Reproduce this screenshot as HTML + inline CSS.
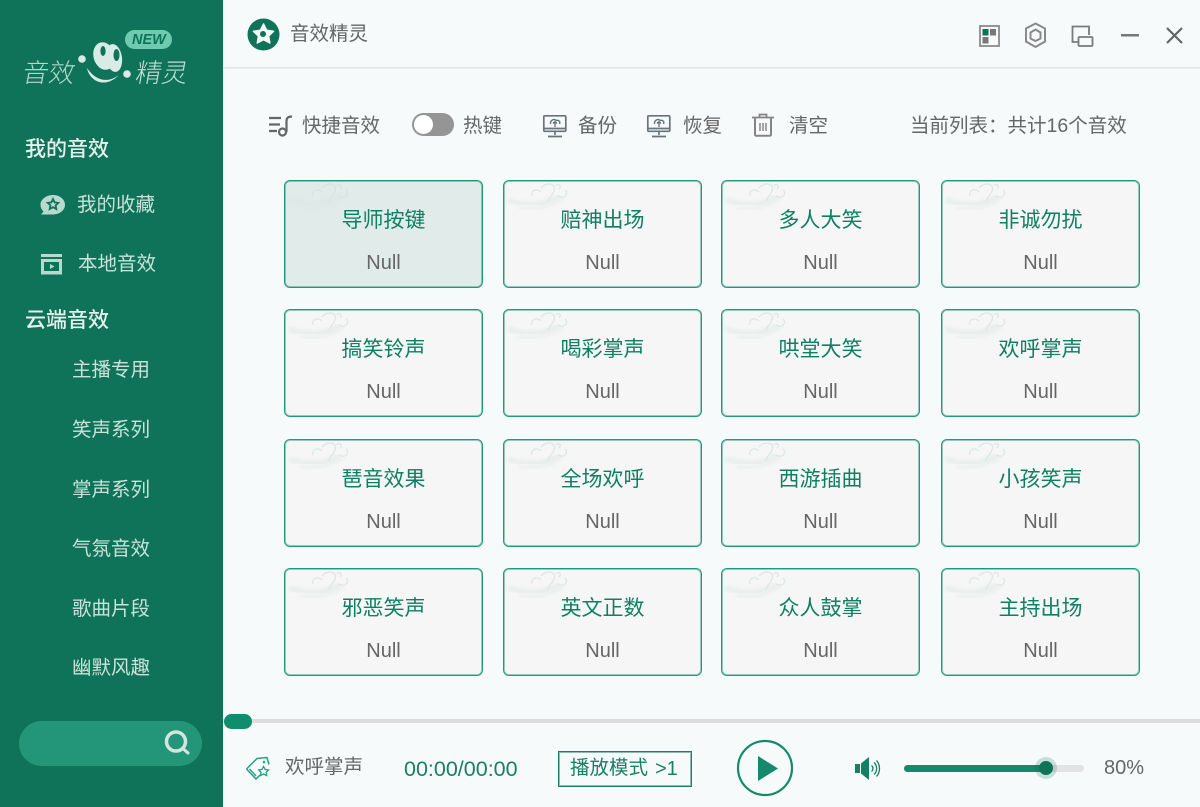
<!DOCTYPE html>
<html lang="zh"><head><meta charset="utf-8"><title>音效精灵</title>
<style>
*{box-sizing:border-box;margin:0;padding:0}
html,body{width:1200px;height:807px;overflow:hidden;background:#f6fafa}
body{position:relative;font-family:"Liberation Sans","Noto Sans CJK SC",sans-serif;color:#666}
.a{position:absolute;white-space:nowrap;line-height:1}
#side{position:absolute;left:0;top:0;width:223px;height:807px;background:#0e7358}
.s{color:#c9e2da;font-size:19.5px}
.h{color:#e4f1ed;font-size:21px;font-weight:500}
.t{color:#666;font-size:19.5px}
.card{position:absolute;width:199px;height:108px;border:1px solid #1f9a7b;box-shadow:inset 0 0 0 1px rgba(47,160,133,.5);border-radius:6px;background:#f6f6f6;overflow:hidden}
.card.on{background:#e0ebea}
.card svg{position:absolute;left:1px;top:1px;opacity:.75}
.card b{position:absolute;left:-1px;right:-1px;top:28px;text-align:center;font-weight:400;font-size:21px;line-height:24px;color:#0e7f62}
.card i{position:absolute;left:-1px;right:-1px;top:71px;text-align:center;font-style:normal;font-size:20px;line-height:22px;color:#666}
svg{position:absolute;overflow:visible}
</style></head><body>
<svg style="left:0;top:0" width="1200" height="807" viewBox="0 0 1200 807">
<rect x="223" y="67" width="977" height="1.5" fill="#e3e6e6"/>
<rect x="223" y="719" width="977" height="4" fill="#dcdcdc"/>
</svg>
<div id="side"></div>
<svg style="left:0;top:0" width="223" height="110" viewBox="0 0 223 110">
<rect x="125" y="30" width="47" height="19" rx="9.5" fill="#6fcbaf"/>
<ellipse cx="104" cy="56" rx="10.500" ry="14" transform="rotate(-15 104 56)" fill="#d8ebe6"/>
<ellipse cx="114" cy="58" rx="8" ry="14" transform="rotate(-8 114 58)" fill="#d8ebe6"/>
<ellipse cx="103" cy="51" rx="2.600" ry="5" fill="#0e7358"/><ellipse cx="116.500" cy="55" rx="3" ry="6" fill="#0e7358"/>
<circle cx="82" cy="59" r="3.800" fill="#d8ebe6"/><circle cx="127" cy="74" r="3.800" fill="#d8ebe6"/>
<path d="M87 68C89 80 104 90 119 75C107 84 95 80 87 68Z" fill="#d8ebe6"/>
</svg>
<div class="a" style="left:132px;top:33px;font-size:14.500px;font-weight:700;font-style:italic;color:#0e7358">NEW</div>
<div class="a" style="left:23px;top:60px;font-size:26px;color:#b5d6cc;transform:skewX(-10deg);font-weight:300">音效</div>
<div class="a" style="left:136px;top:60px;font-size:26px;color:#c4ded6;transform:skewX(-10deg);font-weight:300">精灵</div>
<div class="a h" style="left:25px;top:139px">我的音效</div>
<div class="a s" style="left:77px;top:196px">我的收藏</div>
<div class="a s" style="left:78px;top:255px">本地音效</div>
<div class="a h" style="left:25px;top:310px">云端音效</div>
<div class="a s" style="left:72px;top:361px">主播专用</div>
<div class="a s" style="left:72px;top:421px">笑声系列</div>
<div class="a s" style="left:72px;top:481px">掌声系列</div>
<div class="a s" style="left:72px;top:540px">气氛音效</div>
<div class="a s" style="left:72px;top:600px">歌曲片段</div>
<div class="a s" style="left:72px;top:659px">幽默风趣</div>
<svg style="left:40px;top:195px" width="26" height="22" viewBox="0 0 26 22"><path d="M13 0C19.600 0 25 4.300 25 9.800S19.600 19.500 13 19.500H1L3.500 16.500C1.500 14.800 .5 12.300 .5 9.800 .5 4.300 6.400 0 13 0Z" fill="#b9d9cf"/><path d="M13 4l1.600 3.400 3.700.5-2.700 2.500.7 3.600-3.300-1.800-3.300 1.800.7-3.600-2.700-2.500 3.700-.5Z" fill="none" stroke="#0e7358" stroke-width="1.800"/></svg>
<svg style="left:41px;top:254px" width="22" height="21" viewBox="0 0 22 21"><rect x="0" y="0" width="21" height="3" fill="#b9d9cf"/><rect x="0" y="5" width="21" height="15.500" fill="#b9d9cf"/><rect x="3" y="8" width="15" height="9" fill="#0e7358"/><path d="M9 10l4.500 2.500-4.500 2.500Z" fill="#b9d9cf"/></svg>
<svg style="left:19px;top:721px" width="183" height="45" viewBox="0 0 183 45"><rect width="183" height="45" rx="22.500" fill="#23967a"/><circle cx="157" cy="20.500" r="9.500" fill="none" stroke="#d4e6e0" stroke-width="3.500"/><path d="M165 28.500l4 3.500" stroke="#d4e6e0" stroke-width="3" stroke-linecap="round"/></svg>

<svg style="left:247px;top:18px" width="33" height="33" viewBox="0 0 33 33"><circle cx="16.500" cy="16.500" r="16" fill="#0e7358"/><path d="M16.500 6l3.200 6.300 6.800 1-4.900 4.800 1.300 6.900-6.400-3.300-6.200 3.300 1.100-6.900-4.900-4.800 6.900-1Z" fill="#f2f7f6" stroke="#f2f7f6" stroke-width="1.500" stroke-linejoin="round"/><circle cx="16" cy="16" r="3" fill="#0e7358"/></svg>
<div class="a t" style="left:290px;top:25px;font-size:19.5px">音效精灵</div>
<svg style="left:979px;top:25px" width="21" height="22" viewBox="0 0 21 22"><rect x="1" y="1" width="19" height="20" fill="#f8fafa" stroke="#8b8b8b" stroke-width="1.800"/><rect x="3.500" y="4" width="6" height="6.500" fill="#0e7358"/><rect x="11" y="4" width="6" height="6.500" fill="#777"/><rect x="3.500" y="12" width="6" height="6.500" fill="#777"/></svg>
<svg style="left:1025px;top:22px" width="21" height="27" viewBox="0 0 21 27"><path d="M10.500 1.500L20 6.500v13L10.500 25 1 19.500v-13Z" fill="none" stroke="#8a8a8a" stroke-width="2"/><path d="M10.500 7.500L15.500 10.500v6L10.500 19 5.500 16.500V10.500Z" fill="none" stroke="#8a8a8a" stroke-width="2"/></svg>
<svg style="left:1071px;top:25px" width="23" height="23" viewBox="0 0 23 23"><path d="M7 17H1.500V1.500H18V10" fill="none" stroke="#7a7a7a" stroke-width="1.800"/><rect x="7.500" y="12" width="14" height="9" rx="1" fill="#f6fafa" stroke="#7a7a7a" stroke-width="1.800"/></svg>
<svg style="left:1121px;top:34px" width="18" height="3" viewBox="0 0 18 3"><rect width="18" height="2.500" fill="#777"/></svg>
<svg style="left:1166px;top:27px" width="17" height="17" viewBox="0 0 17 17"><path d="M1 1l15 15M16 1L1 16" stroke="#666" stroke-width="2.200" fill="none"/></svg>

<svg style="left:268px;top:115px" width="25" height="22" viewBox="0 0 25 22"><path d="M1 3h12M1 9.500h11M1 16h8" stroke="#666" stroke-width="2.200"/><path d="M18.500 17V6C18.500 3 20 1.500 24 1.500" fill="none" stroke="#666" stroke-width="2.200"/><circle cx="14.500" cy="17" r="3.500" fill="none" stroke="#666" stroke-width="2.200"/></svg>
<div class="a t" style="left:302px;top:117px">快捷音效</div>
<svg style="left:412px;top:113px" width="42" height="23" viewBox="0 0 42 23"><rect width="42" height="23" rx="11.500" fill="#959595"/><circle cx="11.500" cy="11.500" r="9.500" fill="#fff"/></svg>
<div class="a t" style="left:463px;top:117px">热键</div>
<svg style="left:543px;top:115px" width="24" height="23" viewBox="0 0 24 23"><rect x=".8" y=".8" width="22" height="15.500" rx="1" fill="none" stroke="#68747c" stroke-width="1.700"/><path d="M1 13.500h22M12 16v4M5 21.500h14" stroke="#68747c" stroke-width="1.700" fill="none"/><path d="M7.500 9C7 5.500 11 3 13.500 5.500 16 4.800 17.500 7 16.500 9M12 12V7M10 8.500l2-2 2 2" stroke="#68747c" stroke-width="1.400" fill="none"/></svg>
<div class="a t" style="left:578px;top:117px">备份</div>
<svg style="left:647px;top:115px" width="24" height="23" viewBox="0 0 24 23"><rect x=".8" y=".8" width="22" height="15.500" rx="1" fill="none" stroke="#68747c" stroke-width="1.700"/><path d="M1 13.500h22M12 16v4M5 21.500h14" stroke="#68747c" stroke-width="1.700" fill="none"/><path d="M7.500 9C7 5.500 11 3 13.500 5.500 16 4.800 17.500 7 16.500 9M12 12V7M10 8.500l2-2 2 2" stroke="#68747c" stroke-width="1.400" fill="none"/></svg>
<div class="a t" style="left:683px;top:117px">恢复</div>
<svg style="left:751px;top:113px" width="24" height="24" viewBox="0 0 24 24"><path d="M1 4.500h22M8.500 4V1.500h7V4" stroke="#858585" stroke-width="1.800" fill="none"/><path d="M4 5v16.500a1.300 1.300 0 0 0 1.300 1.300h13.400a1.300 1.300 0 0 0 1.300-1.300V5" stroke="#858585" stroke-width="2" fill="none"/><path d="M9 10v8M12 10v8M15 10v8" stroke="#858585" stroke-width="1.500"/></svg>
<div class="a t" style="left:789px;top:117px">清空</div>
<div class="a t" style="left:910px;top:117px;font-size:19.5px">当前列表：共计16个音效</div>

<svg width="0" height="0" style="left:0;top:0"><defs><filter id="bl"><feGaussianBlur stdDeviation="1.500"/></filter><g id="cloud"><path d="M3 18C20 24 38 24 54 14" fill="none" stroke="#dbe7e4" stroke-width="5" opacity=".7" filter="url(#bl)"/><path d="M14 26C30 28 46 24 58 16" fill="none" stroke="#dfe9e6" stroke-width="3" opacity=".7" filter="url(#bl)"/><path d="M27 14C25 8 33 6 36 10M36 6C42 -1 52 2 49 9 47 14 43 16 43 20M54 7C58 3 52 1 51 4M53 14C60 18 64 11 60 8" fill="none" stroke="#d3e3df" stroke-width="1.300"/></g></defs></svg>

<div class="card on" style="left:284px;top:180px"><svg width="90" height="50"><use href="#cloud"/></svg><b>导师按键</b><i>Null</i></div>
<div class="card" style="left:503px;top:180px"><svg width="90" height="50"><use href="#cloud"/></svg><b>赔神出场</b><i>Null</i></div>
<div class="card" style="left:721px;top:180px"><svg width="90" height="50"><use href="#cloud"/></svg><b>多人大笑</b><i>Null</i></div>
<div class="card" style="left:941px;top:180px"><svg width="90" height="50"><use href="#cloud"/></svg><b>非诚勿扰</b><i>Null</i></div>
<div class="card" style="left:284px;top:309px"><svg width="90" height="50"><use href="#cloud"/></svg><b>搞笑铃声</b><i>Null</i></div>
<div class="card" style="left:503px;top:309px"><svg width="90" height="50"><use href="#cloud"/></svg><b>喝彩掌声</b><i>Null</i></div>
<div class="card" style="left:721px;top:309px"><svg width="90" height="50"><use href="#cloud"/></svg><b>哄堂大笑</b><i>Null</i></div>
<div class="card" style="left:941px;top:309px"><svg width="90" height="50"><use href="#cloud"/></svg><b>欢呼掌声</b><i>Null</i></div>
<div class="card" style="left:284px;top:439px"><svg width="90" height="50"><use href="#cloud"/></svg><b>琶音效果</b><i>Null</i></div>
<div class="card" style="left:503px;top:439px"><svg width="90" height="50"><use href="#cloud"/></svg><b>全场欢呼</b><i>Null</i></div>
<div class="card" style="left:721px;top:439px"><svg width="90" height="50"><use href="#cloud"/></svg><b>西游插曲</b><i>Null</i></div>
<div class="card" style="left:941px;top:439px"><svg width="90" height="50"><use href="#cloud"/></svg><b>小孩笑声</b><i>Null</i></div>
<div class="card" style="left:284px;top:568px"><svg width="90" height="50"><use href="#cloud"/></svg><b>邪恶笑声</b><i>Null</i></div>
<div class="card" style="left:503px;top:568px"><svg width="90" height="50"><use href="#cloud"/></svg><b>英文正数</b><i>Null</i></div>
<div class="card" style="left:721px;top:568px"><svg width="90" height="50"><use href="#cloud"/></svg><b>众人鼓掌</b><i>Null</i></div>
<div class="card" style="left:941px;top:568px"><svg width="90" height="50"><use href="#cloud"/></svg><b>主持出场</b><i>Null</i></div>

<svg style="left:224px;top:714px" width="28" height="15" viewBox="0 0 28 15"><rect width="28" height="15" rx="7.500" fill="#0f8d6c"/></svg>
<svg style="left:245px;top:755px" width="26" height="26" viewBox="0 0 26 26"><path d="M1.500 14L12 3.500 22 2.500l2 7" fill="none" stroke="#24a083" stroke-width="1.500"/><path d="M1.500 14l9.500 10 4-4" fill="none" stroke="#24a083" stroke-width="1.500"/><path d="M4.500 14l6.500 7" stroke="#24a083" stroke-width="1.500"/><circle cx="19" cy="7" r="1.300" fill="#24a083"/><path d="M18.500 11.500l1.700 3 3.300.5-2.300 2.300.5 3.200-3.200-1.500-3 1.500.5-3.200-2.300-2.300 3.200-.5Z" fill="none" stroke="#24a083" stroke-width="1.300"/></svg>
<div class="a t" style="left:285px;top:758px">欢呼掌声</div>
<div class="a" style="left:404px;top:759px;color:#197f66;font-size:21.5px">00:00/00:00</div>
<div class="a" style="left:558px;top:751px;width:134px;height:36px;border:1px solid #1c8066;box-shadow:inset 0 0 0 1px rgba(28,128,102,.5)"></div>
<div class="a" style="left:570px;top:759px;font-size:19.5px;color:#197f66">播放模式</div>
<div class="a" style="left:655px;top:759px;font-size:20px;color:#197f66">&gt;1</div>
<svg style="left:737px;top:740px" width="56" height="56" viewBox="0 0 56 56"><circle cx="28" cy="28" r="27" fill="none" stroke="#15896c" stroke-width="2.200"/><path d="M21 16L41 28.500 21 41Z" fill="#14896b"/></svg>
<svg style="left:854px;top:756px" width="26" height="25" viewBox="0 0 26 25"><path d="M1 8h5v9H1Z" fill="#118065"/><path d="M7 7.500L15 1v23L7 17.500Z" fill="#118065"/><path d="M17.500 9.500C19.500 11 19.500 14 17.500 15.500M20 6.500C23.500 9.500 23.500 15.500 20 18.500M22.500 4.500C26.500 9 26.500 16 22.500 20.500" fill="none" stroke="#118065" stroke-width="1.300"/></svg>
<svg style="left:904px;top:755px" width="182" height="26" viewBox="0 0 182 26"><rect y="10" width="180" height="7" rx="3.500" fill="#e3e3e3"/><rect y="10" width="142" height="7" rx="3.500" fill="#128b6b"/><circle cx="142" cy="13" r="11" fill="#0e7358" opacity=".2"/><circle cx="142" cy="13" r="7" fill="#0e7358"/></svg>
<div class="a t" style="left:1104px;top:758px;font-size:20px">80%</div>
</body></html>
